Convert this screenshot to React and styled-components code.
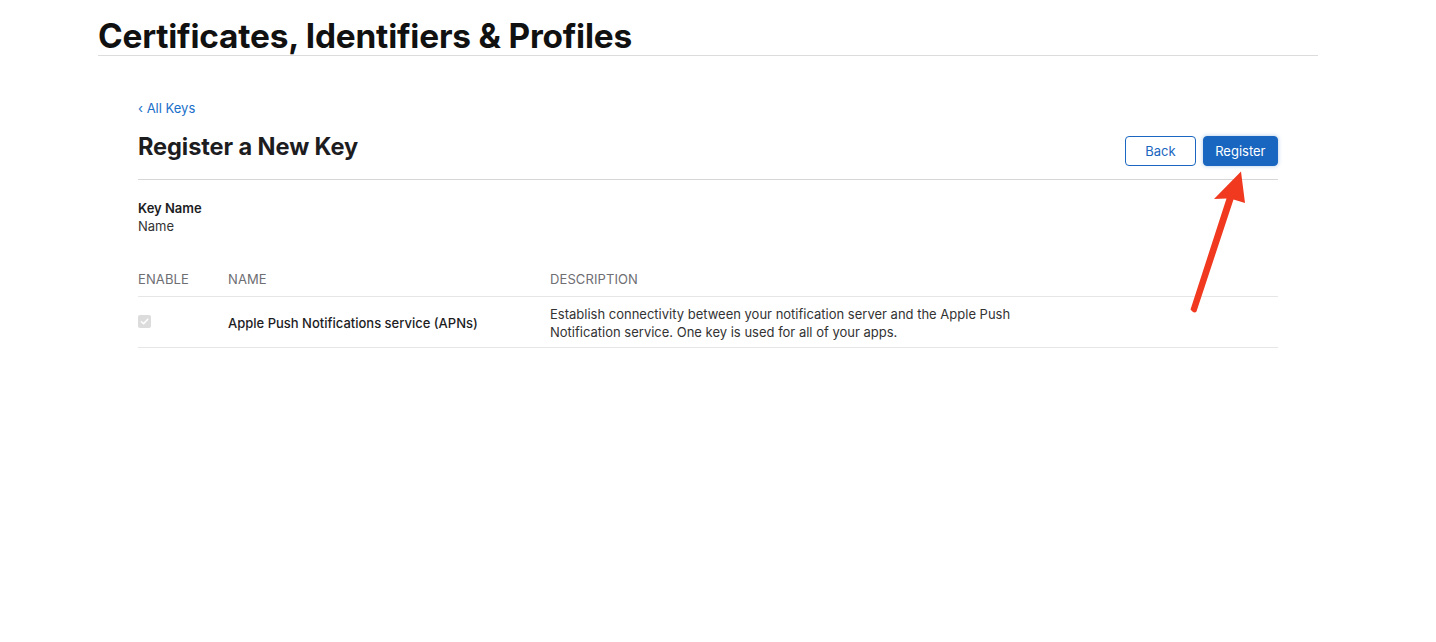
import styled, { createGlobalStyle } from "styled-components";

const Global = createGlobalStyle`
    html, body {
        margin: 0;
        padding: 0;
        background: #fff;
    }
    body {
        font-family: Inter, "Liberation Sans", sans-serif;
        color: #1d1d1f;
        -webkit-font-smoothing: antialiased;
    }
`;

const Page = styled.div`
    position: relative;
    width: 1436px;
    min-height: 642px;
`;

const Header = styled.header`
    margin-left: 98px;
    width: 1220px;
    border-bottom: 1px solid #dcdcdc;
    padding-top: 17px;
`;

const SiteTitle = styled.h1`
    margin: 0;
    font-size: 33.4px;
    line-height: 38px;
    font-weight: 700;
    letter-spacing: -0.2px;
    color: #111;
`;

const Main = styled.main`
    margin-left: 138px;
    width: 1140px;
    padding-top: 41px;
`;

const BackLink = styled.a`
    display: inline-block;
    font-size: 13px;
    line-height: 16px;
    color: #1a6fc9;
    text-decoration: none;
`;

const TitleRow = styled.div`
    display: flex;
    align-items: flex-start;
    justify-content: space-between;
    padding: 13px 0 13px;
    border-bottom: 1px solid #d6d6d6;
`;

const PageTitle = styled.h2`
    margin: 3px 0 0;
    font-size: 23.6px;
    line-height: 28px;
    font-weight: 700;
    color: #1d1d1f;
    letter-spacing: -0.1px;
`;

const Actions = styled.div`
    display: flex;
    gap: 7px;
    margin-top: 6px;
`;

const Button = styled.button`
    height: 30px;
    padding: 0 ${(p) => (p.$primary ? "11.5px" : "19px")};
    border-radius: 4px;
    font-family: inherit;
    font-size: 13px;
    cursor: pointer;
    border: 1px solid #1a66c0;
    color: ${(p) => (p.$primary ? "#fff" : "#1a66c0")};
    background: ${(p) => (p.$primary ? "#1866bf" : "#fff")};
    box-shadow: ${(p) => (p.$primary ? "0 0 4px rgba(24,102,191,0.35)" : "none")};
`;

const Field = styled.div`
    padding-top: 19px;
    font-size: 13px;
    line-height: 18px;
`;

const FieldLabel = styled.div`
    font-weight: 600;
    color: #1d1d1f;
`;

const FieldValue = styled.div`
    color: #333;
`;

const Table = styled.div`
    margin-top: 27px;
`;

const Row = styled.div`
    display: grid;
    grid-template-columns: 90px 322px 475px;
    align-items: ${(p) => (p.$head ? "center" : "start")};
    border-bottom: 1px solid #e6e6e6;
    padding: ${(p) => (p.$head ? "8px 0 8px" : "8px 0 6px")};
    font-size: 13px;
    line-height: 18px;
`;

const HeadCell = styled.div`
    color: #6e6e73;
    text-transform: uppercase;
    letter-spacing: 0.1px;
`;

const Cell = styled.div`
    color: ${(p) => (p.$strong ? "#1d1d1f" : "#333")};
    font-weight: ${(p) => (p.$strong ? 500 : 400)};
    padding-top: ${(p) => p.$pt || 0}px;
`;

const Check = styled.span`
    display: inline-flex;
    align-items: center;
    justify-content: center;
    width: 13px;
    height: 13px;
    margin-top: 1px;
    border-radius: 2px;
    background: #dcdcdc;
`;

const Arrow = styled.svg`
    position: absolute;
    left: 0;
    top: 0;
    pointer-events: none;
`;

export default function App() {
    return (
        <Page>
            <Global />
            <Header>
                <SiteTitle>Certificates, Identifiers &amp; Profiles</SiteTitle>
            </Header>
            <Main>
                <BackLink href="#">‹ All Keys</BackLink>
                <TitleRow>
                    <PageTitle>Register a New Key</PageTitle>
                    <Actions>
                        <Button>Back</Button>
                        <Button $primary>Register</Button>
                    </Actions>
                </TitleRow>
                <Field>
                    <FieldLabel>Key Name</FieldLabel>
                    <FieldValue>Name</FieldValue>
                </Field>
                <Table>
                    <Row $head>
                        <HeadCell>Enable</HeadCell>
                        <HeadCell>Name</HeadCell>
                        <HeadCell>Description</HeadCell>
                    </Row>
                    <Row>
                        <Cell $pt={7}>
                            <Check>
                                <svg width="9" height="9" viewBox="0 0 10 10">
                                    <path d="M1.5 5.2 L4 7.6 L8.6 2.4" fill="none" stroke="#fff" strokeWidth="1.6" strokeLinecap="round" strokeLinejoin="round" />
                                </svg>
                            </Check>
                        </Cell>
                        <Cell $strong $pt={9}>Apple Push Notifications service (APNs)</Cell>
                        <Cell>
                            Establish connectivity between your notification server and the Apple Push
                            Notification service. One key is used for all of your apps.
                        </Cell>
                    </Row>
                </Table>
            </Main>
            <Arrow width="1436" height="642" viewBox="0 0 1436 642">
                <path
                    d="M1190.5 309.5 L1226.5 198.5 L1214 199 L1241 171.5 L1245 203 L1233.5 199.5 L1196.5 311.5 Q1194 314 1190.5 309.5 Z"
                    fill="#f0391e"
                />
            </Arrow>
        </Page>
    );
}
